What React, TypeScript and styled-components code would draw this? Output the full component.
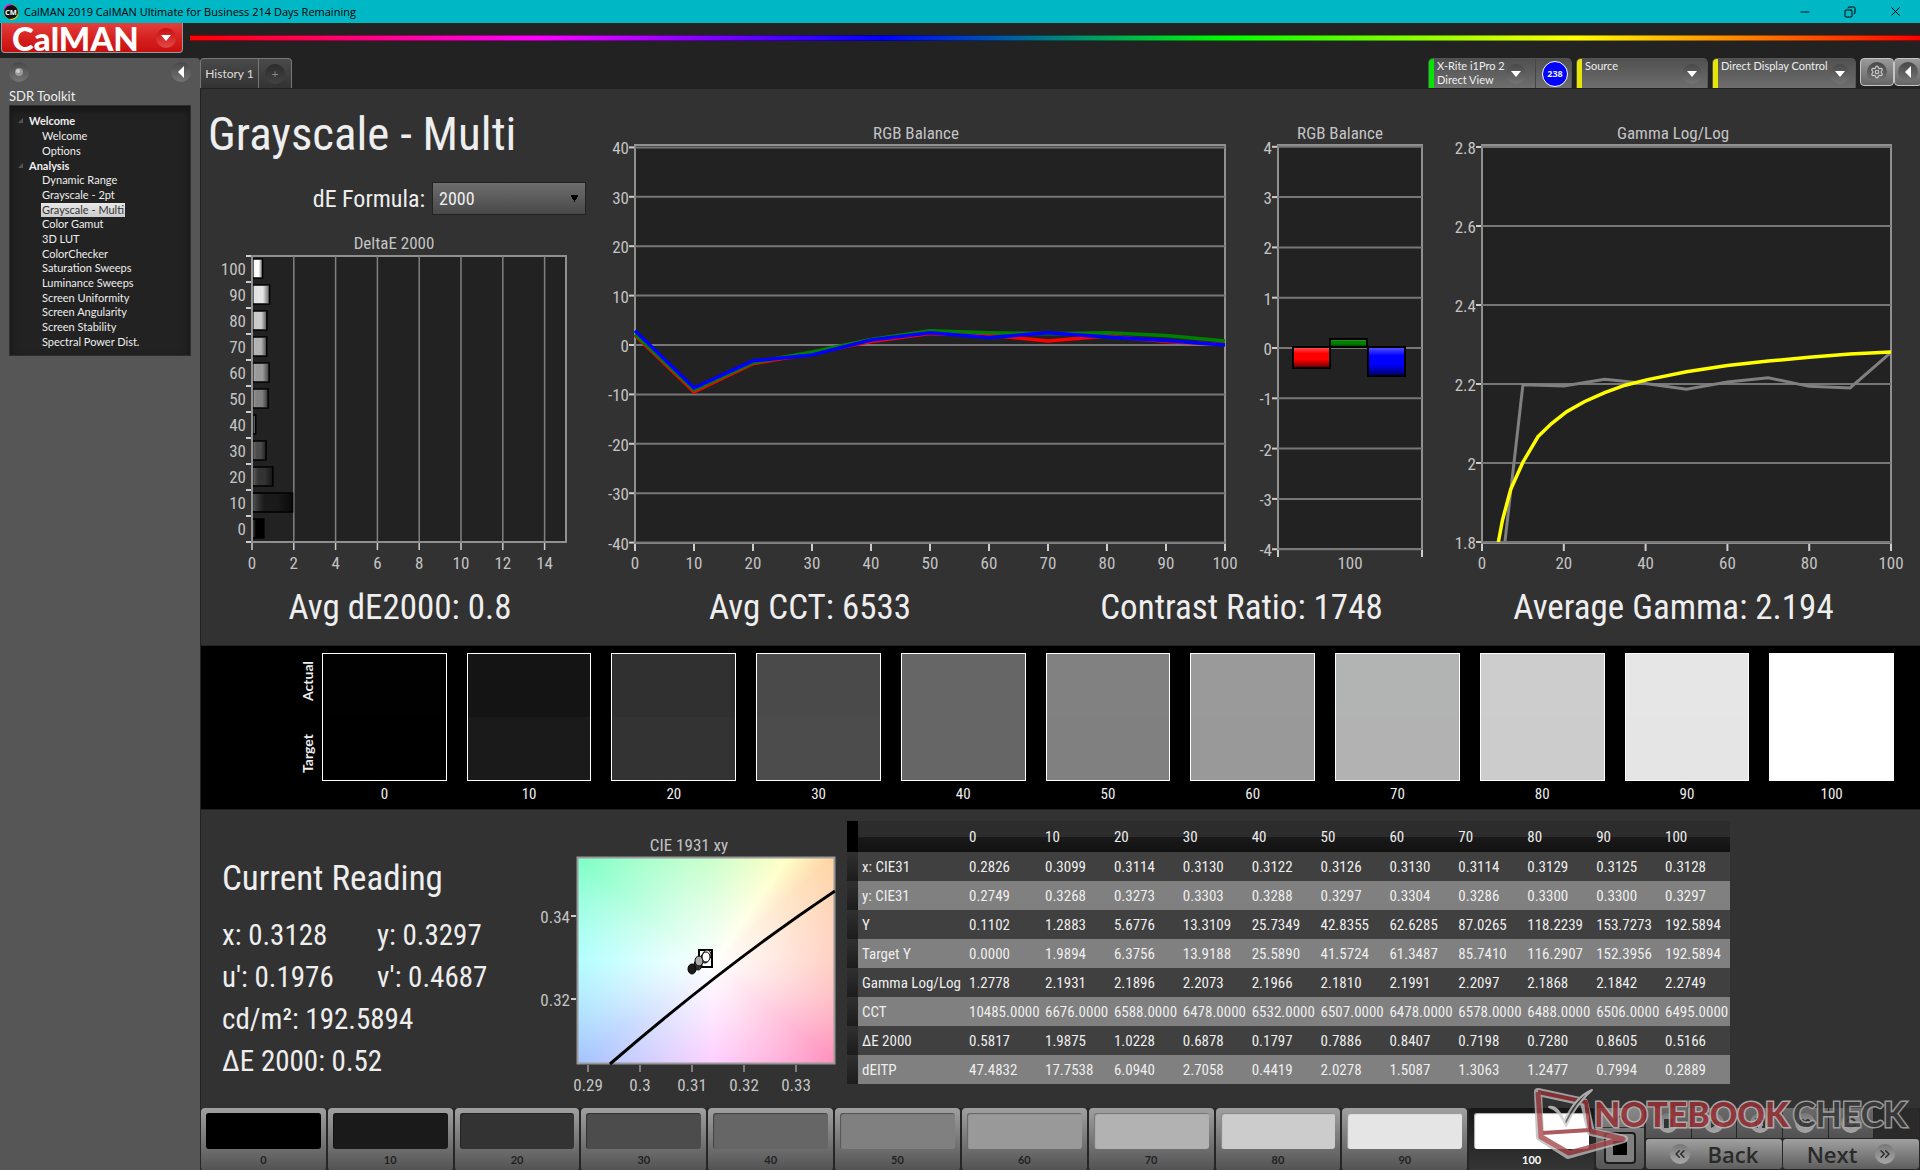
import React from 'react';
import styled, { createGlobalStyle } from 'styled-components';
import { Settings, Copy, Minus, X, ChevronsLeft, ChevronsRight, ChevronUp } from 'lucide-react';

const narrow = "'Roboto Condensed', 'Arial Narrow', Roboto, sans-serif";
const ui = "Lato, 'Open Sans', sans-serif";
const system = "'Open Sans', 'Noto Sans', sans-serif";

const GlobalStyle = createGlobalStyle`
  * { box-sizing: border-box; }
  body { margin: 0; background: #222; font-family: ${ui}; color: #eee; overflow-x: hidden; }
  button, select { font-family: inherit; border: 0; padding: 0; margin: 0; color: inherit; }
  h1, h2, p, ul, figure { margin: 0; padding: 0; }
  ul { list-style: none; }
`;

const App = styled.div`
  display: flex;
  flex-direction: column;
  min-height: 100vh;
  overflow: hidden;
`;

/* ---------- window frame ---------- */
const TitleBar = styled.div`
  display: flex;
  align-items: center;
  height: 23px;
  padding: 0 6px 0 3px;
  gap: 5px;
  background: #00b7c6;
  color: #000;
  font: 11px ${system};
`;
const WindowTitle = styled.span`
  flex: 1;
`;
const WindowControls = styled.div`
  display: flex;
  gap: 7px;
`;
const WindowButton = styled.button`
  display: flex;
  align-items: center;
  justify-content: center;
  width: 38px;
  height: 20px;
  background: none;
`;

const Header = styled.header`
  display: flex;
  align-items: flex-start;
  height: 35px;
  padding-left: 1px;
  gap: 7px;
  background: #222;
`;
const LogoButton = styled.button`
  display: flex;
  align-items: center;
  justify-content: space-between;
  width: 182px;
  height: 30px;
  padding: 0 6px 0 10px;
  border: 1px solid #999;
  border-top: 0;
  border-radius: 0 0 4px 4px;
  background: linear-gradient(#e2403d, #d5201e 55%, #c80f0f);
  color: #fff;
  font: 900 33px/26px ${ui};
`;
const Spectrum = styled.div`
  flex: 1;
  height: 6px;
  margin-top: 12px;
  border: solid rgba(0, 0, 0, 0.4);
  border-width: 1px 0;
  background: linear-gradient(90deg, #f00, #f0f 20%, #00f 40%, #0f0 60%, #ff0 80%, #f00);
`;

const Body = styled.div`
  display: flex;
  flex: 1;
`;

/* ---------- sidebar ---------- */
const Sidebar = styled.nav`
  display: flex;
  flex-direction: column;
  width: 200px;
  padding: 4px 9px;
  border-radius: 0 4px 0 0;
  background: #565656;
`;
const SidebarTop = styled.div`
  display: flex;
  justify-content: space-between;
`;
const roundFills = {
  raised: 'linear-gradient(#484848, #747474)',
  red: 'linear-gradient(#c80d0d, #e24a48)',
  light: 'linear-gradient(#777, #a8a8a8)',
  dim: 'linear-gradient(#2c2c2c, #424242)',
};
const Round = styled.span<{ $tone?: keyof typeof roundFills }>`
  display: flex;
  align-items: center;
  justify-content: center;
  flex: none;
  width: 20px;
  height: 20px;
  border-radius: 50%;
  background: ${(p) => roundFills[p.$tone || 'raised']};
`;
const RoundButton = styled(Round).attrs({ as: 'button' })``;
const SidebarTitle = styled.h2`
  padding-top: 6px;
  font: 13px/16px ${ui};
`;
const Tree = styled.div`
  margin-top: 1px;
  padding: 7px 8px 6px;
  border: 1px solid #2e2e2e;
  background: #222;
  box-shadow: inset 0 4px 8px #151515;
  font-size: 11px;
`;
const TreeGroup = styled.div`
  display: flex;
  align-items: center;
  gap: 6px;
  height: 15px;
  font-size: 11px;
  font-weight: 700;
`;
const TreeList = styled.ul<{ $height: number }>`
  display: grid;
  grid-auto-rows: 1fr;
  height: ${(p) => p.$height}px;
  padding-left: 23px;
`;
const TreeItem = styled.li`
  display: flex;
  align-items: center;
`;
const TreeLink = styled.a<{ $active?: boolean }>`
  padding: 0 1px;
  line-height: 14px;
  color: ${(p) => (p.$active ? '#333' : '#eee')};
  background: ${(p) => (p.$active ? 'linear-gradient(#e8e8e8, #ccc)' : 'none')};
  text-decoration: none;
  white-space: nowrap;
`;

/* ---------- tab strip ---------- */
const Content = styled.div`
  display: flex;
  flex-direction: column;
  flex: 1;
  min-width: 0;
`;
const Strip = styled.div`
  display: flex;
  height: 30px;
  margin-right: -2px;
`;
const Tab = styled.button<{ $first?: boolean }>`
  display: flex;
  align-items: center;
  justify-content: center;
  width: ${(p) => (p.$first ? 59 : 33)}px;
  border: solid #777;
  border-width: 1px 1px 0 ${(p) => (p.$first ? 1 : 0)}px;
  border-radius: ${(p) => (p.$first ? '4px 0 0 0' : '0 4px 0 0')};
  background: linear-gradient(#4a4a4a, #333);
  color: ${(p) => (p.$first ? '#ddd' : '#888')};
  font-size: 12px;
`;
const Spacer = styled.div`
  flex: 1;
`;
const Gap = styled.span`
  flex: none;
  width: 5px;
`;
const Device = styled.button<{ $width: number }>`
  display: flex;
  align-items: center;
  width: ${(p) => p.$width}px;
  margin-right: 4px;
  border: solid #555;
  border-width: 1px 1px 0;
  border-radius: 5px 5px 0 0;
  overflow: hidden;
  background: linear-gradient(#505050, #6e6e6e);
  text-align: left;
  font: 11px/14px ${ui};
`;
const Status = styled.span<{ $color: string }>`
  flex: none;
  align-self: stretch;
  width: 5px;
  background: ${(p) => p.$color};
`;
const DeviceName = styled.span`
  flex: 1;
  align-self: flex-start;
  padding-left: 3px;
  white-space: nowrap;
`;
const CountCell = styled.span`
  display: flex;
  align-items: center;
  align-self: stretch;
  margin-left: 9px;
  padding: 0 3px 0 6px;
  border-left: 1px solid #444;
`;
const Count = styled.span`
  width: 26px;
  height: 26px;
  border: 1px solid #fff;
  border-radius: 50%;
  background: #00f;
  font: 700 9px/24px ${system};
  text-align: center;
`;
const SquareButton = styled.button`
  display: flex;
  align-items: center;
  justify-content: center;
  flex: none;
  width: 34px;
  height: 28px;
  border: 1px solid #c4c4c4;
  border-radius: 4px;
  background: linear-gradient(#999, #666);
  &:last-child { width: 28px; }
`;

/* ---------- workspace ---------- */
const Workspace = styled.main`
  position: relative;
  display: flex;
  flex-direction: column;
  flex: 1;
  background: #323232;
  box-shadow: inset 1px 1px #222;
  font-family: ${narrow};
`;
const Charts = styled.section`
  display: grid;
  grid-template-columns: 400fr 640fr 210fr 470fr;
  padding-top: 22px;
`;
const Heading = styled.h1`
  padding: 0 8px;
  font: 47px/48px ${narrow};
`;
const Formula = styled.div`
  display: flex;
  align-items: center;
  justify-content: flex-end;
  gap: 7px;
  height: 33px;
  margin: 24px 14px 0 0;
  font-size: 24px;
`;
const FormulaSelect = styled.select`
  width: 154px;
  height: 33px;
  padding-left: 6px;
  appearance: none;
  border: 1px solid #222;
  background:
    conic-gradient(from -30deg at 50% 100%, #000 60deg, transparent 0) right 6px center / 9px 7px no-repeat,
    linear-gradient(#6e6e6e, #484848);
  color: #eee;
  font-size: 18px;
`;
const Chart = styled.svg`
  display: block;
  width: 100%;
  height: auto;
  font-family: ${narrow};
  font-size: 17px;
  fill: #c4c4c4;
`;
const Stats = styled.section`
  display: grid;
  grid-template-columns: 400fr 420fr 443fr 421fr 36fr;
  height: 65px;
  font-size: 35px;
  line-height: 56px;
  text-align: center;
`;

const Band = styled.section`
  display: flex;
  gap: 6px;
  height: 165px;
  padding: 7px 26px 0 99px;
  border: solid #222;
  border-width: 1px 0 1px 1px;
  background: #000;
`;
const Vertical = styled.div`
  display: flex;
  justify-content: space-between;
  width: 16px;
  height: 128px;
  padding: 8px 0;
  writing-mode: vertical-rl;
  transform: rotate(180deg);
  font: 700 14px/16px ${ui};
`;
const Patches = styled.div`
  display: grid;
  grid-template-columns: repeat(11, 1fr);
  gap: 20px;
  flex: 1;
`;
const Patch = styled.figure`
  font-size: 15px;
  line-height: 27px;
  text-align: center;
`;
const PatchBox = styled.div<{ $actual: string; $target: string }>`
  height: 128px;
  border: 1px solid #fff;
  background: linear-gradient(${(p) => p.$actual} 50%, ${(p) => p.$target} 50%);
`;

const Lower = styled.section`
  display: grid;
  grid-template-columns: 320px 327px auto;
  justify-content: start;
  flex: 1;
  min-height: 297px;
`;
const Reading = styled.div`
  padding: 48px 0 0 22px;
`;
const ReadingTitle = styled.h2`
  font: 35px/42px ${narrow};
`;
const ReadingGrid = styled.div`
  display: grid;
  grid-template-columns: 155px 1fr;
  grid-auto-rows: 42px;
  margin-top: 14px;
  font-size: 29px;
  line-height: 42px;
  white-space: nowrap;
`;
const Wide = styled.span`
  grid-column: span 2;
`;
const Cie = styled.figure`
  padding: 25px 12px 0 57px;
  font-size: 17px;
`;
const CieTitle = styled.figcaption`
  height: 22px;
  padding-right: 34px;
  color: #c4c4c4;
  line-height: 20px;
  text-align: center;
`;
const CiePlot = styled.svg`
  display: block;
  width: 258px;
  height: 207px;
  overflow: visible;
  fill: #c4c4c4;
  background:
    radial-gradient(farthest-corner at 137px 107px, #fff, rgba(255, 255, 255, 0.72) 30%, rgba(255, 255, 255, 0) 100%),
    conic-gradient(from 0deg at 137px 107px, #b4ffb4 0deg, #ffffb4 35deg, #ffd29c 48deg, #ffb09c 90deg,
      #ff82b4 128deg, #ffb4ff 180deg, #a0c0ff 234deg, #90ffff 272deg, #7cffc4 308deg, #b4ffb4 360deg);
`;
const TableWrap = styled.div`
  padding-top: 11px;
`;
const Table = styled.table`
  width: 883px;
  border-collapse: collapse;
  table-layout: fixed;
  font-size: 15px;
  th, td { padding: 0 0 0 4px; font-weight: 400; text-align: left; white-space: nowrap; }
`;
const HeadRow = styled.tr`
  height: 31px;
  background: linear-gradient(#2c2c2c 50%, #1a1a1a 52%, #111);
`;
const DataRow = styled.tr`
  height: 29px;
  background: #404040;
  &:nth-child(even) { background: #808080; }
`;
const Handle = styled.td<{ $head?: boolean }>`
  background: ${(p) => (p.$head ? '#000' : 'linear-gradient(#303030, #1c1c1c)')};
`;

/* ---------- bottom bar ---------- */
const Bottom = styled.footer`
  position: relative;
  display: flex;
  gap: 2px;
  height: 62px;
  padding: 0 1px 1px;
  background: #262626;
`;
const Levels = styled.div`
  display: grid;
  grid-template-columns: repeat(11, 1fr);
  gap: 2px;
  flex: 1;
`;
const Level = styled.button<{ $active?: boolean }>`
  display: flex;
  flex-direction: column;
  align-items: center;
  padding: 5px 5px 0;
  border-radius: 4px;
  background: ${(p) => (p.$active ? 'linear-gradient(#161616, #363636)' : 'linear-gradient(#a0a0a0, #525252)')};
  color: ${(p) => (p.$active ? '#fff' : '#222')};
  font: 700 11px/22px ${ui};
`;
const LevelSwatch = styled.span<{ $color: string }>`
  width: 100%;
  height: 36px;
  border-radius: 3px;
  background: ${(p) => p.$color};
  box-shadow: inset 1px 1px 1px rgba(0, 0, 0, 0.35);
`;
const StopColumn = styled.div`
  display: flex;
  flex-direction: column;
  align-items: center;
  width: 48px;
  border-radius: 4px;
  background: linear-gradient(#888, #555);
  color: #333;
`;
const ExpandButton = styled.button`
  width: 100%;
  height: 20px;
  border-bottom: 1px solid #333;
  background: none;
  line-height: 0;
`;
const StopButton = styled.button`
  display: flex;
  align-items: center;
  justify-content: center;
  width: 32px;
  height: 32px;
  margin-top: 4px;
  border: 2px solid #1c1c1c;
  border-radius: 4px;
  background: #808080;
`;
const Controls = styled.div`
  display: grid;
  grid-template-columns: repeat(6, 1fr);
  grid-template-rows: 30px 30px;
  gap: 1px;
  width: 273px;
`;
const Transport = styled.button<{ $off?: boolean }>`
  display: flex;
  align-items: center;
  justify-content: center;
  background: ${(p) => (p.$off ? '#2a2a2a' : 'linear-gradient(#6a6a6a, #525252)')};
  color: #333;
`;
const Nav = styled.button`
  display: flex;
  grid-column: span 3;
  align-items: center;
  justify-content: center;
  gap: 18px;
  border-radius: 3px;
  background: linear-gradient(#a0a0a0, #5e5e5e);
  color: #2a2a2a;
  font: 600 22px/28px ${system};
`;
const Watermark = styled.svg`
  position: absolute;
  right: 0;
  bottom: 10px;
  width: 390px;
  height: 78px;
  pointer-events: none;
`;

/* ---------- data ---------- */
const levels = [0, 10, 20, 30, 40, 50, 60, 70, 80, 90, 100];
const targets = ['#000', '#1a1a1a', '#333', '#4c4c4c', '#666', '#808080', '#999', '#b2b2b2', '#ccc', '#e5e5e5', '#fff'];
const actuals = ['#010101', '#141414', '#303030', '#4a4a4a', '#666', '#818181', '#9a9a9a', '#b2b3b3', '#cdcdcd', '#e6e6e6', '#fff'];
const deltaE = [0.5817, 1.9875, 1.0228, 0.6878, 0.1797, 0.7886, 0.8407, 0.7198, 0.728, 0.8605, 0.5166];
const rows: [string, string][] = [
  ['x: CIE31', '0.2826 0.3099 0.3114 0.3130 0.3122 0.3126 0.3130 0.3114 0.3129 0.3125 0.3128'],
  ['y: CIE31', '0.2749 0.3268 0.3273 0.3303 0.3288 0.3297 0.3304 0.3286 0.3300 0.3300 0.3297'],
  ['Y', '0.1102 1.2883 5.6776 13.3109 25.7349 42.8355 62.6285 87.0265 118.2239 153.7273 192.5894'],
  ['Target Y', '0.0000 1.9894 6.3756 13.9188 25.5890 41.5724 61.3487 85.7410 116.2907 152.3956 192.5894'],
  ['Gamma Log/Log', '1.2778 2.1931 2.1896 2.2073 2.1966 2.1810 2.1991 2.2097 2.1868 2.1842 2.2749'],
  ['CCT', '10485.0000 6676.0000 6588.0000 6478.0000 6532.0000 6507.0000 6478.0000 6578.0000 6488.0000 6506.0000 6495.0000'],
  ['ΔE 2000', '0.5817 1.9875 1.0228 0.6878 0.1797 0.7886 0.8407 0.7198 0.7280 0.8605 0.5166'],
  ['dEITP', '47.4832 17.7538 6.0940 2.7058 0.4419 2.0278 1.5087 1.3063 1.2477 0.7994 0.2889'],
];
const balance = [
  { color: '#f00', values: [2, -9.5, -3.8, -1.7, 0.7, 2.3, 2, 0.8, 1.8, 0.7, 0.1] },
  { color: '#008000', values: [2.2, -9.1, -3.6, -1.4, 1.1, 2.9, 2.5, 2.3, 2.5, 1.9, 0.8] },
  { color: '#00f', values: [2.9, -8.7, -3.2, -2, 1, 2.5, 1.5, 2.5, 1.6, 0.9, 0] },
];
const gammaMeasured: [number, number][] = [
  [5.6, 1.8], [10, 2.198], [20, 2.195], [30, 2.212], [40, 2.201], [50, 2.187],
  [60, 2.205], [70, 2.216], [80, 2.194], [90, 2.19], [100, 2.28],
];
const gammaTarget: [number, number][] = [
  [4, 1.8], [5, 1.855], [7, 1.933], [10, 2.002], [13.7, 2.067], [17, 2.1], [20.7, 2.13], [25, 2.155],
  [30, 2.178], [35, 2.197], [40.5, 2.211], [50, 2.231], [60, 2.247], [70, 2.258], [80, 2.268], [90, 2.276], [100, 2.281],
];

const toPoints = (pts: [number, number][], x: (v: number) => number, y: (v: number) => number) =>
  pts.map(([a, b]) => `${x(a)},${y(b)}`).join(' ');

/* ---------- charts ---------- */
type PlotProps = {
  title: string;
  titleAt: number;
  width: number;
  left: number;
  right: number;
  bottom: number;
  yTicks: number[];
  xTicks: number[];
  xLabels: { at: number; text: string }[];
  y: (v: number) => number;
  children?: React.ReactNode;
};

/* Titled plot with horizontal grid lines; the plot top sits at 35. */
function Plot({ title, titleAt, width, left, right, bottom, yTicks, xTicks, xLabels, y, children }: PlotProps) {
  return (
    <Chart viewBox={`0 0 ${width} 470`} role="img" aria-label={title}>
      <text x={titleAt} y="29" textAnchor="middle">{title}</text>
      <rect x={left} y="35" width={right - left} height={bottom - 35} fill="#222" stroke="#909090" strokeWidth="2" />
      {yTicks.map((t) => (
        <g key={t}>
          <path d={`M${left} ${y(t)}H${right}`} stroke="#777" strokeWidth="2" />
          <path d={`M${left - 6} ${y(t)}h5`} stroke="#ccc" strokeWidth="2" />
          <text x={left - 6} y={y(t) + 7} textAnchor="end">{t}</text>
        </g>
      ))}
      {xTicks.map((x) => (
        <path key={x} d={`M${x} ${bottom + 1}v7`} stroke="#ccc" strokeWidth="2" />
      ))}
      {xLabels.map((l) => (
        <text key={l.text} x={l.at} y="459" textAnchor="middle">{l.text}</text>
      ))}
      {children}
    </Chart>
  );
}

function DeltaChart() {
  const x = (v: number) => 52 + v * 20.9;
  return (
    <Chart viewBox="0 0 400 365" role="img" aria-label="DeltaE 2000">
      <defs>
        <linearGradient id="shade">
          <stop offset="0" stopColor="#fff" stopOpacity="0.25" />
          <stop offset="0.3" stopColor="#888" stopOpacity="0" />
          <stop offset="0.6" stopColor="#000" stopOpacity="0" />
          <stop offset="1" stopColor="#000" stopOpacity="0.6" />
        </linearGradient>
      </defs>
      <text x="194" y="34" textAnchor="middle">DeltaE 2000</text>
      <rect x="52" y="41" width="314" height="286" fill="#222" stroke="#909090" strokeWidth="2" />
      {[0, 2, 4, 6, 8, 10, 12, 14].map((v) => (
        <g key={v}>
          <path d={`M${x(v)} 41V327`} stroke="#808080" strokeWidth="1.5" />
          <path d={`M${x(v)} 328v7`} stroke="#ccc" strokeWidth="1.5" />
          <text x={x(v)} y="354" textAnchor="middle">{v}</text>
        </g>
      ))}
      {levels.map((l, i) => {
        const top = 41 + (10 - i) * 26;
        const w = deltaE[i] * 20.4 - 1;
        return (
          <g key={l}>
            <path d={`M46 ${top}h5`} stroke="#ccc" strokeWidth="2" />
            <text x="46" y={top + 19} textAnchor="end">{l}</text>
            <rect x="53" y={top + 3} width={w} height="19" fill={targets[i]} stroke="#000" strokeWidth="1.5" />
            <rect x="53" y={top + 4} width={w} height="17" fill="url(#shade)" />
          </g>
        );
      })}
      <path d="M46 327h5" stroke="#ccc" strokeWidth="2" />
      <path d="M52 41V327" stroke="#909090" strokeWidth="2" />
    </Chart>
  );
}

function BalanceLines() {
  const x = (v: number) => 35 + v * 5.9;
  const y = (v: number) => 235 - v * 4.94;
  return (
    <Plot title="RGB Balance" titleAt={316} width={640} left={35} right={625} bottom={433} y={y}
      yTicks={[40, 30, 20, 10, 0, -10, -20, -30, -40]} xTicks={levels.map(x)}
      xLabels={levels.map((l) => ({ at: x(l), text: String(l) }))}>
      {balance.map((s) => (
        <polyline key={s.color} fill="none" stroke={s.color} strokeWidth="3.5"
          points={toPoints(s.values.map((v, i): [number, number] => [i * 10, v]), x, y)} />
      ))}
    </Plot>
  );
}

function BalanceBars() {
  const y = (v: number) => 238 - v * 50.3;
  return (
    <Plot title="RGB Balance" titleAt={100} width={210} left={38} right={182} bottom={439} y={y}
      yTicks={[4, 3, 2, 1, 0, -1, -2, -3, -4]} xTicks={[38, 182]} xLabels={[{ at: 110, text: '100' }]}>
      <defs>
        <linearGradient id="gloss" x2="0" y2="1">
          <stop offset="0" stopColor="#fff" stopOpacity="0.35" />
          <stop offset="0.3" stopColor="#fff" stopOpacity="0" />
          <stop offset="0.6" stopColor="#000" stopOpacity="0" />
          <stop offset="1" stopColor="#000" stopOpacity="0.65" />
        </linearGradient>
      </defs>
      {[['#f00', 53, 237, 21], ['#008000', 90, 229, 8], ['#00f', 128, 237, 29]].map(([c, bx, by, h]) => (
        <g key={c}>
          <rect x={bx} y={by} width="37" height={h} fill={c as string} />
          <rect x={bx} y={by} width="37" height={h} fill="url(#gloss)" stroke="#000" strokeWidth="2" />
        </g>
      ))}
    </Plot>
  );
}

function GammaChart() {
  const x = (v: number) => 32 + v * 4.09;
  const y = (v: number) => 432 - (v - 1.8) * 395;
  const ticks = [0, 20, 40, 60, 80, 100];
  return (
    <Plot title="Gamma Log/Log" titleAt={223} width={470} left={32} right={441} bottom={433} y={y}
      yTicks={[2.8, 2.6, 2.4, 2.2, 2, 1.8]} xTicks={ticks.map(x)}
      xLabels={ticks.map((t) => ({ at: x(t), text: String(t) }))}>
      <polyline fill="none" stroke="#808080" strokeWidth="3" points={toPoints(gammaMeasured, x, y)} />
      <polyline fill="none" stroke="#ff0" strokeWidth="3.5" points={toPoints(gammaTarget, x, y)} />
    </Plot>
  );
}

function CieChart() {
  return (
    <Cie>
      <CieTitle>CIE 1931 xy</CieTitle>
      <CiePlot viewBox="0 0 258 207" role="img" aria-label="Chromaticity of the measured points">
        <rect x="0.5" y="0.5" width="257" height="206" fill="none" stroke="#999" strokeWidth="2" />
        <path d="M33 207Q150 106 258 34" fill="none" stroke="#000" strokeWidth="3" />
        <rect x="122" y="93" width="13" height="17" fill="none" stroke="#000" strokeWidth="2" />
        {[['#333', 121, 108], ['#1a1a1a', 115, 112], ['#888', 128, 101], ['#aaa', 122, 104], ['#eee', 130, 98], ['#fff', 129, 100]].map(([c, cx, cy]) => (
          <ellipse key={c} cx={cx} cy={cy} rx="4" ry="5" fill={c as string} stroke="#000" strokeWidth="1" />
        ))}
        {[['0.34', 59], ['0.32', 142]].map(([t, y]) => (
          <g key={t}>
            <path d={`M-6 ${y}h5`} stroke="#ccc" strokeWidth="2" />
            <text x="-7" y={Number(y) + 7} textAnchor="end">{t}</text>
          </g>
        ))}
        {['0.29', '0.3', '0.31', '0.32', '0.33'].map((t, i) => (
          <g key={t}>
            <path d={`M${11 + i * 52} 208v7`} stroke="#ccc" />
            <text x={11 + i * 52} y="234" textAnchor="middle">{t}</text>
          </g>
        ))}
      </CiePlot>
    </Cie>
  );
}

const Down = () => (
  <svg width="10" height="6" viewBox="0 0 10 6"><path d="M0 0h10L5 6z" fill="#fff" /></svg>
);
const Left = () => (
  <svg width="6" height="12" viewBox="0 0 6 12"><path d="M6 0v12L0 6z" fill="#fff" /></svg>
);
const Corner = () => (
  <svg width="5" height="5" viewBox="0 0 5 5"><path d="M5 0v5H0z" fill="#555" /></svg>
);

const analysis = ['Dynamic Range', 'Grayscale - 2pt', 'Grayscale - Multi', 'Color Gamut', '3D LUT', 'ColorChecker',
  'Saturation Sweeps', 'Luminance Sweeps', 'Screen Uniformity', 'Screen Angularity', 'Screen Stability', 'Spectral Power Dist.'];

const transport = [
  { name: 'Stop reading', glyph: <path d="M3 3h9v9H3z" /> },
  { name: 'Read', glyph: <path d="M4 2l9 5-9 5z" /> },
  { name: 'Read series', glyph: <path d="M2 2h3v2H4v6h1v2H2zM12 2H9v2h1v6H9v2h3zM6 6h2v2H6z" /> },
  { name: 'Read continuously', glyph: <path d="M2 7c2-5 4-3 5 0s4 4 5 0c-1-5-4-3-5 0s-4 4-5 0" fill="none" stroke="#333" strokeWidth="2" /> },
  { name: 'Repeat', glyph: <path d="M3 6c1-4 6-4 8-1M11 8c-1 4-6 4-8 1" fill="none" stroke="#333" strokeWidth="2" /> },
];

export default function CalMan() {
  return (
    <App>
      <GlobalStyle />
      <TitleBar>
        <svg width="16" height="16" viewBox="0 0 15 15">
          <circle cx="7.5" cy="7.5" r="7" fill="#111" stroke="#5a7" />
          <path d="M1 5A7 7 0 0 1 8 .6" fill="none" stroke="#f0f" />
          <path d="M14 10A7 7 0 0 1 7 14.4" fill="none" stroke="#fc0" />
          <text x="7.5" y="10" fontSize="7" fontWeight="700" fill="#fff" textAnchor="middle">CM</text>
        </svg>
        <WindowTitle>CalMAN 2019 CalMAN Ultimate for Business 214 Days Remaining</WindowTitle>
        <WindowControls>
          <WindowButton aria-label="Minimise"><Minus size={14} strokeWidth={1.5} /></WindowButton>
          <WindowButton aria-label="Restore"><Copy size={12} strokeWidth={2} transform="scale(-1 1)" /></WindowButton>
          <WindowButton aria-label="Close"><X size={15} strokeWidth={1.5} /></WindowButton>
        </WindowControls>
      </TitleBar>
      <Header>
        <LogoButton>CalMAN<Round $tone="red"><Down /></Round></LogoButton>
        <Spectrum />
      </Header>
      <Body>
        <Sidebar>
          <SidebarTop>
            <RoundButton aria-label="Pin">
              <svg width="10" height="10"><circle cx="5" cy="5" r="4" fill="#999" /><circle cx="4" cy="4" r="2" fill="#ccc" /></svg>
            </RoundButton>
            <RoundButton aria-label="Collapse"><Left /></RoundButton>
          </SidebarTop>
          <SidebarTitle>SDR Toolkit</SidebarTitle>
          <Tree>
            <TreeGroup><Corner />Welcome</TreeGroup>
            <TreeList $height={30}>
              <TreeItem><TreeLink href="#welcome">Welcome</TreeLink></TreeItem>
              <TreeItem><TreeLink href="#options">Options</TreeLink></TreeItem>
            </TreeList>
            <TreeGroup><Corner />Analysis</TreeGroup>
            <TreeList $height={176}>
              {analysis.map((a) => (
                <TreeItem key={a}><TreeLink href="#analysis" $active={a === 'Grayscale - Multi'}>{a}</TreeLink></TreeItem>
              ))}
            </TreeList>
          </Tree>
        </Sidebar>
        <Content>
          <Strip>
            <Tab $first>History 1</Tab>
            <Tab aria-label="Add history"><Round $tone="dim">+</Round></Tab>
            <Spacer />
            <Device $width={144}>
              <Status $color="#00e600" />
              <DeviceName>X-Rite i1Pro 2<br />Direct View</DeviceName>
              <Round><Down /></Round>
              <CountCell><Count>238</Count></CountCell>
            </Device>
            <Device $width={132}>
              <Status $color="#e6e600" />
              <DeviceName>Source</DeviceName>
              <Round><Down /></Round>
              <Gap />
            </Device>
            <Device $width={144}>
              <Status $color="#e6e600" />
              <DeviceName>Direct Display Control</DeviceName>
              <Round><Down /></Round>
              <Gap />
            </Device>
            <SquareButton aria-label="Settings"><Round><Settings size={14} color="#ccc" /></Round></SquareButton>
            <SquareButton aria-label="Collapse panel"><Round><Left /></Round></SquareButton>
          </Strip>
          <Workspace>
            <Charts>
              <div>
                <Heading>Grayscale - Multi</Heading>
                <Formula>
                  <label htmlFor="formula">dE Formula:</label>
                  <FormulaSelect id="formula" defaultValue="2000"><option>2000</option></FormulaSelect>
                </Formula>
                <DeltaChart />
              </div>
              <BalanceLines />
              <BalanceBars />
              <GammaChart />
            </Charts>
            <Stats>
              <p>Avg dE2000: 0.8</p>
              <p>Avg CCT: 6533</p>
              <p>Contrast Ratio: 1748</p>
              <p>Average Gamma: 2.194</p>
            </Stats>
            <Band>
              <Vertical><span>Target</span><span>Actual</span></Vertical>
              <Patches>
                {levels.map((l, i) => (
                  <Patch key={l}>
                    <PatchBox $actual={actuals[i]} $target={targets[i]} />
                    <figcaption>{l}</figcaption>
                  </Patch>
                ))}
              </Patches>
            </Band>
            <Lower>
              <Reading>
                <ReadingTitle>Current Reading</ReadingTitle>
                <ReadingGrid>
                  <span>x: 0.3128</span><span>y: 0.3297</span>
                  <span>u': 0.1976</span><span>v': 0.4687</span>
                  <Wide>cd/m²: 192.5894</Wide>
                  <Wide>ΔE 2000: 0.52</Wide>
                </ReadingGrid>
              </Reading>
              <CieChart />
              <TableWrap>
                <Table>
                  <colgroup>
                    <col width="11" /><col width="107" /><col width="76" />
                    {levels.slice(1).map((l) => <col key={l} />)}
                  </colgroup>
                  <thead>
                    <HeadRow>
                      <Handle $head /><th />
                      {levels.map((l) => <th key={l} scope="col">{l}</th>)}
                    </HeadRow>
                  </thead>
                  <tbody>
                    {rows.map(([name, values]) => (
                      <DataRow key={name}>
                        <Handle /><th scope="row">{name}</th>
                        {values.split(' ').map((v, i) => <td key={i}>{v}</td>)}
                      </DataRow>
                    ))}
                  </tbody>
                </Table>
              </TableWrap>
            </Lower>
            <Bottom>
              <Levels>
                {levels.map((l, i) => (
                  <Level key={l} $active={l === 100}><LevelSwatch $color={targets[i]} /><span>{l}</span></Level>
                ))}
              </Levels>
              <StopColumn>
                <ExpandButton aria-label="Expand"><ChevronUp size={16} /></ExpandButton>
                <StopButton aria-label="Stop"><svg width="14" height="14"><rect width="14" height="14" /></svg></StopButton>
              </StopColumn>
              <Controls>
                {transport.map((t) => (
                  <Transport key={t.name} aria-label={t.name}>
                    <Round $tone="light"><svg width="14" height="14" fill="#333">{t.glyph}</svg></Round>
                  </Transport>
                ))}
                <Transport $off aria-label="Unavailable" />
                <Nav><Round $tone="light"><ChevronsLeft size={16} /></Round>Back</Nav>
                <Nav>Next<Round $tone="light"><ChevronsRight size={16} /></Round></Nav>
              </Controls>
              <Watermark viewBox="0 0 390 78" aria-hidden="true">
                <g opacity="0.8" strokeLinejoin="round">
                  <path d="M8 10L54 20l7 30 33 7-56 16-28-18z" fill="none" stroke="#bbb" strokeWidth="8" />
                  <path d="M8 10L56 20l4 28-48 3" fill="none" stroke="#983035" strokeWidth="4" />
                  <path d="M8 10l3 45 28 16 54-14-33-8" fill="none" stroke="#a8484d" strokeWidth="5" />
                  <path d="M19 25q9-2 15 15Q45 15 62 8 46 22 36 44 30 28 19 25z" fill="#444" stroke="#ccc" strokeWidth="2" />
                </g>
                <g fontFamily="Lato" fontSize="34" strokeWidth="3" paintOrder="stroke" opacity="0.85">
                  <text x="64" y="45" fontWeight="900" fill="#983035" stroke="#bbb">NOTEBOOK</text>
                  <text x="263" y="45" fontWeight="700" fill="#3a3a3a" stroke="#aaa">CHECK</text>
                </g>
              </Watermark>
            </Bottom>
          </Workspace>
        </Content>
      </Body>
    </App>
  );
}
